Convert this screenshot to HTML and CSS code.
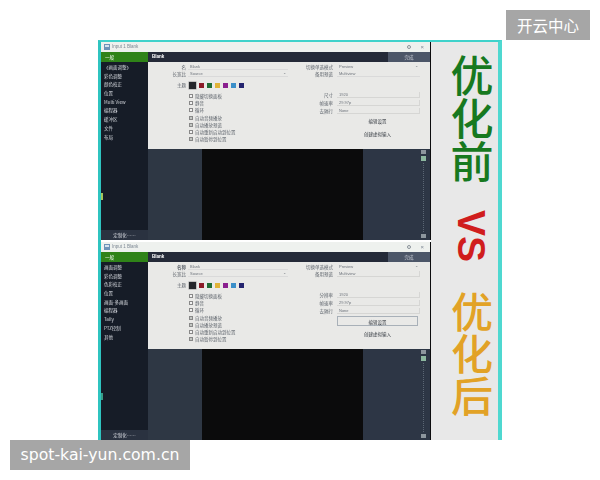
FILE: index.html
```html
<!DOCTYPE html>
<html lang="zh">
<head>
<meta charset="utf-8">
<title>优化前 VS 优化后</title>
<link rel="stylesheet" href="styles.css">
</head>
<body>
<main class="figure">
  <div class="shots">
    <section class="win">
      <span class="marker"></span>
      <div class="titlebar"><svg class="app-icon" viewBox="0 0 6 6"><rect width="6" height="6" fill="#6d93b8"/><rect x="1" y="1" width="4" height="2" fill="#d6e2ee"/></svg><span>Input 1 Blank</span><span class="win-btns"><i class="dot"></i><b>×</b></span></div>
      <div class="win-body">
        <nav class="side">
          <div class="tab">一般</div>
          <ul class="menu">
            <li>《画面调整》</li><li>彩色调整</li><li>颜色校正</li><li>位置</li><li>Multi View</li><li>编程器</li><li>缓冲区</li><li>文件</li><li>布局</li>
          </ul>
          <div class="side-btn">定制化……</div>
        </nav>
        <div class="content">
          <header class="head"><strong>Blank</strong><span class="done">完成</span></header>
          <div class="form">
            <div class="col-l">
              <div class="row"><label>名</label><span class="field">Blank</span></div>
              <div class="row"><label>长宽比</label><span class="field">Source<em>⌄</em></span></div>
              <div class="row colors"><label>主题</label><span class="sw big"></span><span class="sw c1"></span><span class="sw c2"></span><span class="sw c3"></span><span class="sw c4"></span><span class="sw c5"></span><span class="sw c6"></span></div>
              <div class="checks">
                <div class="ck"><i></i>隐藏切换面板</div><div class="ck"><i></i>静音</div><div class="ck"><i></i>循环</div>
              </div>
              <div class="checks second">
                <div class="ck"><i class="on"></i>自动音频播放</div><div class="ck"><i class="on"></i>自动播放预览</div><div class="ck"><i></i>自动重新启动到位置</div><div class="ck"><i class="on"></i>自动暂停到位置</div>
              </div>
            </div>
            <div class="col-r">
              <div class="row"><label>切换单选模式</label><span class="field plain">Preview<em>⌄</em></span></div>
              <div class="row"><label>备用预览</label><span class="field">Multiview</span></div>
              <div class="group">
                <div class="row tall"><label>尺寸</label><span class="field box">1920</span></div>
                <div class="row tall"><label>帧速率</label><span class="field box">29.97p</span></div>
                <div class="row tall"><label>去隔行</label><span class="field box">None</span></div>
              </div>
              <div class="action">编辑设置</div>
              <div class="action link">创建虚拟输入</div>
            </div>
          </div>
          <div class="stage">
            <div class="pane"></div>
            <div class="screen"></div>
            <div class="pane right"><div class="slider"><i></i><i class="green"></i><span class="track"></span><i></i></div></div>
          </div>
        </div>
      </div>
    </section>
    <section class="win">
      <span class="marker faint"></span>
      <div class="titlebar"><svg class="app-icon" viewBox="0 0 6 6"><rect width="6" height="6" fill="#6d93b8"/><rect x="1" y="1" width="4" height="2" fill="#d6e2ee"/></svg><span>Input 1 Blank</span><span class="win-btns"><i class="dot"></i><b>×</b></span></div>
      <div class="win-body">
        <nav class="side">
          <div class="tab">一般</div>
          <ul class="menu">
            <li>画面调整</li><li>彩色调整</li><li>色彩校正</li><li>位置</li><li>画面-多画面</li><li>编程器</li><li>Tally</li><li>PTZ控制</li><li>其他</li>
          </ul>
          <div class="side-btn">定制化……</div>
        </nav>
        <div class="content">
          <header class="head"><strong>Blank</strong><span class="done">完成</span></header>
          <div class="form">
            <div class="col-l">
              <div class="row"><label><b>名称</b></label><span class="field">Blank</span></div>
              <div class="row"><label>长宽比</label><span class="field">Source<em>⌄</em></span></div>
              <div class="row colors"><label>主题</label><span class="sw big"></span><span class="sw c1"></span><span class="sw c2"></span><span class="sw c3"></span><span class="sw c4"></span><span class="sw c5"></span><span class="sw c6"></span></div>
              <div class="checks">
                <div class="ck"><i></i>隐藏切换面板</div><div class="ck"><i></i>静音</div><div class="ck"><i></i>循环</div>
              </div>
              <div class="checks second">
                <div class="ck"><i class="on"></i>自动音频播放</div><div class="ck"><i class="on"></i>自动播放预览</div><div class="ck"><i></i>自动重新启动到位置</div><div class="ck"><i class="on"></i>自动暂停到位置</div>
              </div>
            </div>
            <div class="col-r">
              <div class="row"><label>切换单选模式</label><span class="field plain">Preview<em>⌄</em></span></div>
              <div class="row"><label>备用预览</label><span class="field box">Multiview</span></div>
              <div class="group">
                <div class="row tall"><label>分辨率</label><span class="field box">1920</span></div>
                <div class="row tall"><label>帧速率</label><span class="field box">29.97p</span></div>
                <div class="row tall"><label>去隔行</label><span class="field box">None</span></div>
              </div>
              <div class="action outlined">编辑设置</div>
              <div class="action link">创建虚拟输入</div>
            </div>
          </div>
          <div class="stage">
            <div class="pane"></div>
            <div class="screen"></div>
            <div class="pane right"><div class="slider"><i></i><i class="green"></i><span class="track"></span><i></i></div></div>
          </div>
        </div>
      </div>
    </section>
  </div>
  <aside class="strip">
    <div class="big-text before">优化前</div>
    <div class="big-text vs">VS</div>
    <div class="big-text after">优化后</div>
  </aside>
</main>
<div class="badge top">开云中心</div>
<div class="badge bottom">spot-kai-yun.com.cn</div>
</body>
</html>
```
FILE: styles.css
```css
* { box-sizing: border-box; }
html, body { margin: 0; padding: 0; }
body {
  position: relative;
  width: 600px;
  height: 480px;
  overflow: hidden;
  background: #fff;
  font-family: "Noto Sans CJK SC", "Noto Sans", sans-serif;
}
.figure {
  display: flex;
  width: 404px;
  height: 400px;
  margin: 40px 0 0 98px;
  border-top: 2px solid #3fd2cb;
  border-left: 3px solid #2fc4c0;
  border-right: 4px solid #4fd8d0;
}
.shots {
  display: flex;
  flex-direction: column;
  gap: 2px;
  width: 330px;
  background: #fff;
  filter: blur(.5px);
}
.win {
  position: relative;
  display: flex;
  flex-direction: column;
  height: 198px;
  border-right: 1px solid #0c0c0e;
}
.marker {
  position: absolute;
  top: 151px;
  left: 0;
  width: 2px;
  height: 7px;
  background: #a5c65a;
}
.marker.faint { background: #3a9c86; }
.titlebar {
  display: flex;
  align-items: center;
  gap: 2px;
  height: 10px;
  padding: 0 6px 0 3px;
  background: #eef1ee;
  color: #7d8894;
  font: 4.5px/1 "Liberation Sans", sans-serif;
}
.app-icon { width: 6px; height: 6px; }
.win-btns { display: flex; align-items: center; gap: 9px; margin-left: auto; }
.win-btns b { font-weight: 400; font-size: 6px; }
.dot { width: 4px; height: 4px; border: 1px solid #8a929a; border-radius: 50%; }
.win-body { display: flex; flex: 1; min-height: 0; }
.side {
  display: flex;
  flex-direction: column;
  width: 47px;
  background: #161c27;
  color: #d5d8de;
  font-size: 4.5px;
}
.tab {
  height: 10px;
  padding-left: 4px;
  background: #2f8318;
  color: #fff;
  line-height: 10px;
}
.menu { flex: 1; margin: 0; padding: 0 0 0 3px; list-style: none; }
.menu li { height: 8.7px; line-height: 8.7px; white-space: nowrap; }
.menu li:first-child { margin-top: 1px; }
.side-btn {
  height: 10px;
  background: #2a3240;
  text-align: center;
  line-height: 10px;
}
.content { display: flex; flex: 1; flex-direction: column; min-width: 0; }
.head {
  display: flex;
  justify-content: space-between;
  height: 10px;
  padding-left: 4px;
  background: #242a38;
  color: #fff;
  font: 4.5px/10px "Liberation Sans", sans-serif;
}
.done {
  width: 42px;
  background: #4c5668;
  color: #c8ccd4;
  text-align: center;
  font: 4.5px/10px "Noto Sans CJK SC", sans-serif;
}
.form {
  display: flex;
  height: 87px;
  padding-top: 1.5px;
  background: #e9e9e7;
  color: #5f656d;
  font-size: 4.5px;
}
.col-l { width: 140px; }
.col-r { width: 132px; }
.row { display: flex; align-items: center; height: 7px; }
.row.tall { height: 8px; }
.row label { flex: none; text-align: right; white-space: nowrap; }
.col-l .row label { width: 38px; margin-right: 2px; }
.col-r .row label { width: 45px; margin-right: 4px; }
.field {
  display: flex;
  justify-content: space-between;
  flex: 1;
  height: 6px;
  padding: 0 2px;
  border-bottom: 1px solid #dadada;
  font: 4px/6px "Liberation Sans", sans-serif;
  color: #6e747c;
}
.field em { font-style: normal; line-height: 3px; }
.field.plain { border-bottom: 0; }
.field.box { border: 1px solid #d6d6d4; border-width: 0 1px 1px 0; }
.colors { gap: 3px; height: 8px; margin-top: 3.5px; }
.colors label { margin-right: 0 !important; }
.sw { width: 5px; height: 5px; }
.sw.big { width: 7px; height: 7px; background: #24262b; box-shadow: 0 0 0 .5px #999; }
.c1 { background: #8b1c28; }
.c2 { background: #1f6d35; }
.c3 { background: #e0b338; }
.c4 { background: #8a1f8f; }
.c5 { background: #3b8fc9; }
.c6 { background: #24246f; }
.checks { margin: 3.5px 0 0 41px; }
.checks.second { margin-top: 1px; }
.ck { display: flex; align-items: center; gap: 2px; height: 7px; white-space: nowrap; }
.ck i { width: 4px; height: 4px; border: .5px solid #888; background: #f2f2f2; }
.ck i.on { background: #c2c6c2; }
.group { margin-top: 13px; }
.action {
  width: 81px;
  height: 10px;
  margin: 1px 0 0 49px;
  color: #3a3f46;
  text-align: center;
  line-height: 10px;
}
.action.outlined { border: .5px solid #a8b0b8; }
.action.link { margin-top: 3px; }
.stage { display: flex; flex: 1; min-height: 0; background: #2e3744; }
.pane { flex: none; width: 54px; background: #2e3744; }
.pane.right { display: flex; justify-content: flex-end; width: 67px; padding: 1px 4px 2px 0; background: #2d3645; }
.screen { flex: 1; background: #0b0b0c; }
.slider { display: flex; flex-direction: column; align-items: center; gap: 2px; width: 6px; }
.slider i { flex: none; width: 5px; height: 4px; background: #8d969e; }
.slider i.green { height: 5px; background: #8db8a0; }
.track { flex: 1; width: 1px; border-left: 1px dotted #5b6674; }
.strip {
  display: flex;
  flex-direction: column;
  align-items: center;
  flex: 1;
  padding: 12px 0 0 14px;
  background: #e8e8e8;
}
.big-text {
  writing-mode: vertical-rl;
  font-size: 43px;
  font-weight: 500;
  line-height: 1;
  white-space: nowrap;
}
.before { color: #17791f; }
.vs { margin-top: 27px; color: #d01d1d; font-family: "Liberation Sans", sans-serif; font-size: 39px; font-weight: 700; }
.after { margin-top: 29px; color: #e2a226; font-size: 42px; }
.badge {
  position: absolute;
  height: 30px;
  background: #a6a6a6;
  color: #fff;
  line-height: 30px;
  text-align: center;
}
.badge.top { top: 10px; left: 506px; width: 84px; font-size: 15.5px; }
.badge.bottom { top: 440px; left: 10px; width: 180px; font: 15.7px/30px "DejaVu Sans", sans-serif; }
```
